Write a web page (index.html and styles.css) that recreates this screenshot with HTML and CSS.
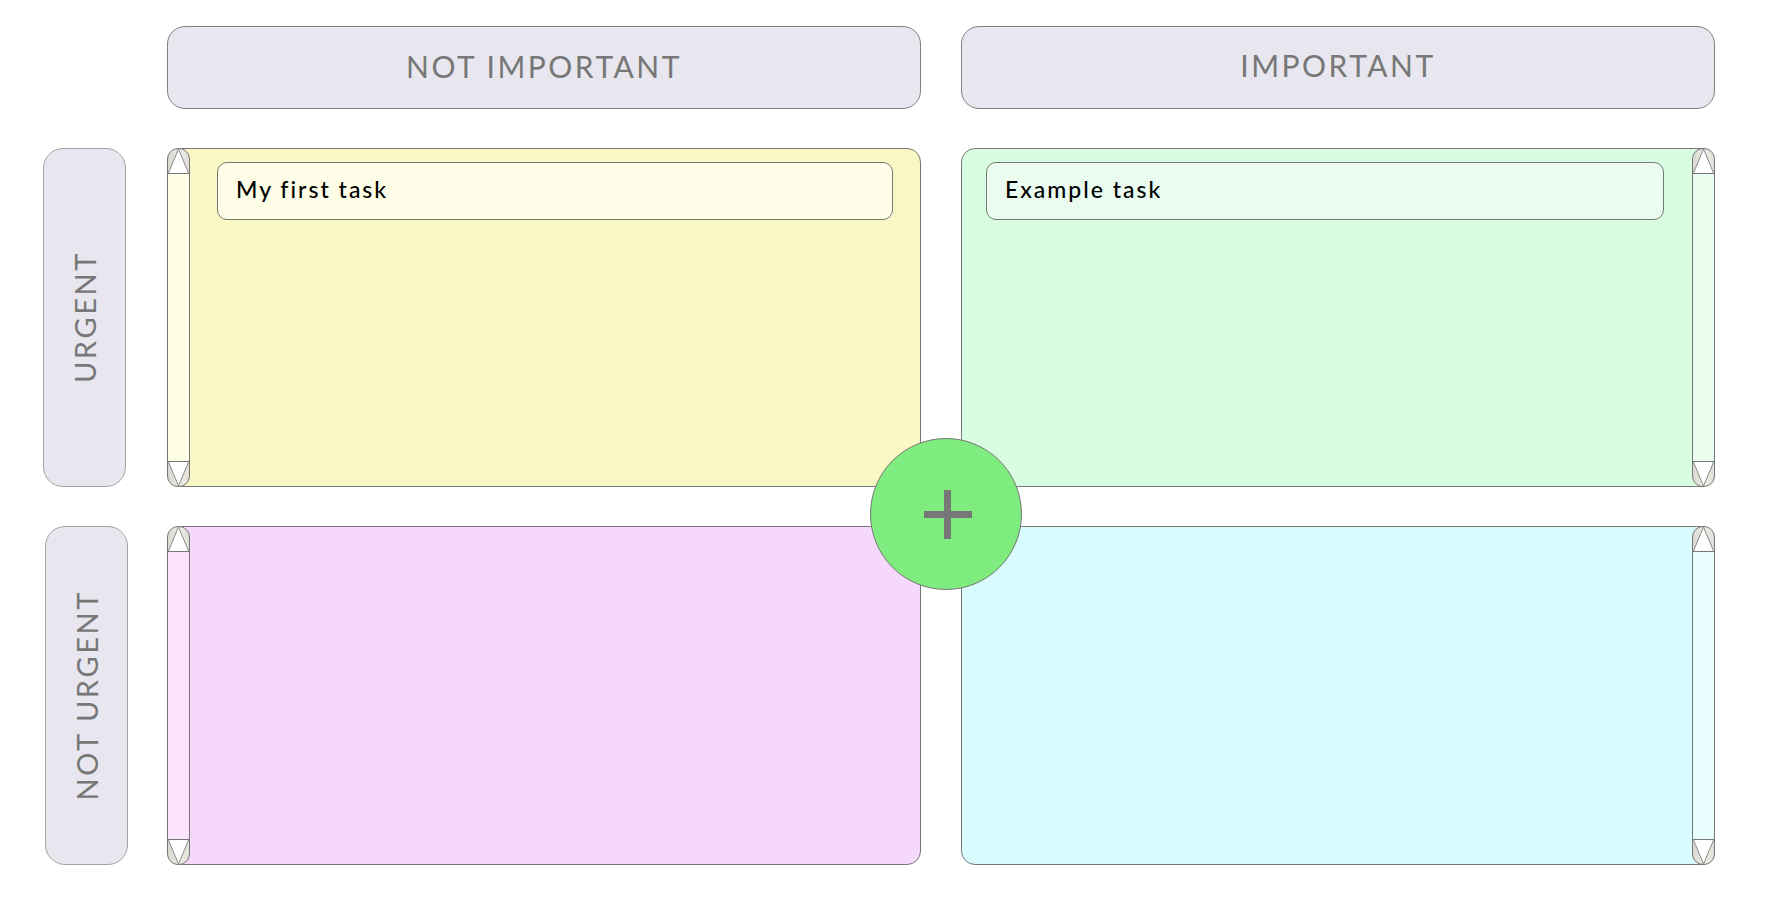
FILE: index.html
```html
<!DOCTYPE html>
<html lang="en">
<head>
<meta charset="utf-8">
<title>Eisenhower Matrix</title>
<link rel="stylesheet" href="styles.css">
</head>
<body>
<main class="board">
  <div class="corner"></div>
  <div class="colhead">NOT IMPORTANT</div>
  <div class="colhead colhead-2">IMPORTANT</div>

  <div class="rowhead"><span class="rowtext">URGENT</span></div>
  <section class="quad quad-left yellow">
    <div class="scroll">
      <svg class="btn" viewBox="0 0 21 25" preserveAspectRatio="none"><polygon points="0,25 10.5,0 21,25" class="tri"/><line x1="0" y1="24.5" x2="21" y2="24.5" class="base"/></svg>
      <div class="track"></div>
      <svg class="btn" viewBox="0 0 21 25" preserveAspectRatio="none"><polygon points="0,0 10.5,25 21,0" class="tri"/><line x1="0" y1="0.5" x2="21" y2="0.5" class="base"/></svg>
    </div>
    <div class="area">
      <div class="task">My first task</div>
    </div>
  </section>
  <section class="quad quad-right green">
    <div class="area">
      <div class="task">Example task</div>
    </div>
    <div class="scroll">
      <svg class="btn" viewBox="0 0 21 25" preserveAspectRatio="none"><polygon points="0,25 10.5,0 21,25" class="tri"/><line x1="0" y1="24.5" x2="21" y2="24.5" class="base"/></svg>
      <div class="track"></div>
      <svg class="btn" viewBox="0 0 21 25" preserveAspectRatio="none"><polygon points="0,0 10.5,25 21,0" class="tri"/><line x1="0" y1="0.5" x2="21" y2="0.5" class="base"/></svg>
    </div>
  </section>

  <div class="rowhead rowhead-2"><span class="rowtext">NOT URGENT</span></div>
  <section class="quad quad-left pink">
    <div class="scroll">
      <svg class="btn" viewBox="0 0 21 25" preserveAspectRatio="none"><polygon points="0,25 10.5,0 21,25" class="tri"/><line x1="0" y1="24.5" x2="21" y2="24.5" class="base"/></svg>
      <div class="track"></div>
      <svg class="btn" viewBox="0 0 21 25" preserveAspectRatio="none"><polygon points="0,0 10.5,25 21,0" class="tri"/><line x1="0" y1="0.5" x2="21" y2="0.5" class="base"/></svg>
    </div>
    <div class="area"></div>
  </section>
  <section class="quad quad-right cyan">
    <div class="area"></div>
    <div class="scroll">
      <svg class="btn" viewBox="0 0 21 25" preserveAspectRatio="none"><polygon points="0,25 10.5,0 21,25" class="tri"/><line x1="0" y1="24.5" x2="21" y2="24.5" class="base"/></svg>
      <div class="track"></div>
      <svg class="btn" viewBox="0 0 21 25" preserveAspectRatio="none"><polygon points="0,0 10.5,25 21,0" class="tri"/><line x1="0" y1="0.5" x2="21" y2="0.5" class="base"/></svg>
    </div>
  </section>

  <button class="add" aria-label="Add task">
    <svg viewBox="0 0 150 150" width="150" height="150"><rect x="53" y="72" width="48" height="7" class="plus"/><rect x="73" y="51" width="7" height="49" class="plus"/></svg>
  </button>
</main>
</body>
</html>
```

FILE: styles.css
```css
* { box-sizing: border-box; }

html, body {
  margin: 0;
  padding: 0;
  background: #ffffff;
}

body {
  font-family: "Lato", "Open Sans", sans-serif;
}

.board {
  position: relative;
  display: grid;
  grid-template-columns: 83px 754px 754px;
  grid-template-rows: 83px 339px 339px;
  column-gap: 40px;
  row-gap: 39px;
  padding: 26px 0 0 44px;
  width: 1766px;
  height: 906px;
}

.colhead {
  background: #e8e6ee;
  border: 1px solid #808080;
  border-radius: 18px;
  display: flex;
  align-items: center;
  justify-content: center;
  color: #777777;
  font-size: 30px;
  letter-spacing: 2.5px;
  padding-bottom: 3px;
}

.colhead-2 {
  padding-bottom: 6px;
}

.rowhead {
  background: #e8e6ee;
  border: 1px solid #a4a4a4;
  border-radius: 20px;
  display: flex;
  align-items: center;
  justify-content: center;
  margin-left: -1px;
  margin-right: 1px;
}

.rowhead-2 {
  margin-left: 1px;
  margin-right: -1px;
}

.rowtext {
  writing-mode: vertical-rl;
  transform: rotate(180deg);
  color: #777777;
  font-size: 29px;
  letter-spacing: 2.6px;
}

.quad {
  display: flex;
  border: 1px solid #777777;
  border-radius: 14px;
}

.yellow { background: #f9f8c5; }
.green  { background: #d8fde0; }
.pink   { background: #f7d8fd; }
.cyan   { background: #d8fcfe; }

.yellow .track { background: #fefee6; }
.green  .track { background: #e9fdee; }
.pink   .track { background: #fce3fe; }
.cyan   .track { background: #e9feff; }

.yellow .task { background: #fefee8; }
.green  .task { background: #eafcf0; }

.scroll {
  position: relative;
  z-index: 1;
  width: 23px;
  flex: 0 0 23px;
  margin: -1px 0;
  border: 1px solid #777777;
  border-radius: 11px;
  overflow: hidden;
  display: flex;
  flex-direction: column;
  background: #f2f2ea;
}

.quad-left .scroll { margin-left: -1px; }
.quad-right .scroll { margin-right: -1px; }

.btn {
  display: block;
  width: 21px;
  height: 25px;
  flex: 0 0 25px;
  background: linear-gradient(90deg, rgba(0,0,0,0.10), rgba(0,0,0,0.02) 60%, rgba(0,0,0,0.08));
}

.tri {
  fill: #ffffff;
  stroke: #888888;
  stroke-width: 1;
}

.base {
  stroke: #777777;
  stroke-width: 1;
}

.track {
  flex: 1;
}

.area {
  flex: 1;
  padding: 13px 27px 0 27px;
}

.quad-right .area {
  padding: 13px 28px 0 24px;
}

.task {
  height: 58px;
  border: 1px solid #777777;
  border-radius: 10px;
  display: flex;
  align-items: center;
  padding-left: 18px;
  padding-bottom: 4px;
  color: #000000;
  font-size: 23px;
  font-weight: 500;
  letter-spacing: 2px;
}

.add {
  position: absolute;
  left: 870px;
  top: 438px;
  width: 152px;
  height: 152px;
  border-radius: 50%;
  border: 1px solid #777777;
  background: #7eec7e;
  padding: 0;
  margin: 0;
  cursor: pointer;
}

.add svg {
  display: block;
}

.plus {
  fill: #777777;
}
```
